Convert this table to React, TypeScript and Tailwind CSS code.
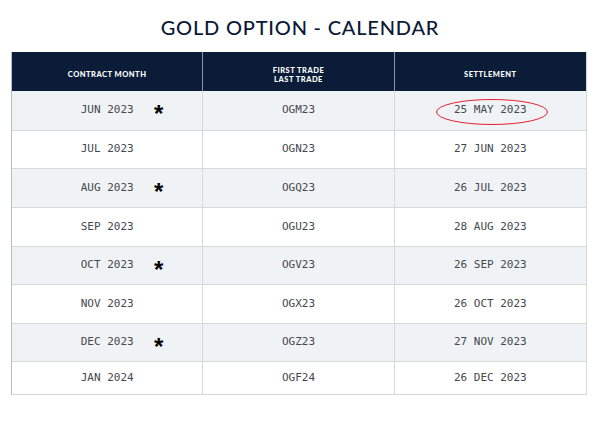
import React from "react";

const rows: { m: string; code: string; s: string; star: boolean; h: string }[] = [
  { m: "JUN 2023", code: "OGM23", s: "25 MAY 2023", star: true, h: "h-[39px]" },
  { m: "JUL 2023", code: "OGN23", s: "27 JUN 2023", star: false, h: "h-[38px]" },
  { m: "AUG 2023", code: "OGQ23", s: "26 JUL 2023", star: true, h: "h-[39px]" },
  { m: "SEP 2023", code: "OGU23", s: "28 AUG 2023", star: false, h: "h-[39px]" },
  { m: "OCT 2023", code: "OGV23", s: "26 SEP 2023", star: true, h: "h-[38px]" },
  { m: "NOV 2023", code: "OGX23", s: "26 OCT 2023", star: false, h: "h-[39px]" },
  { m: "DEC 2023", code: "OGZ23", s: "27 NOV 2023", star: true, h: "h-[38px]" },
  { m: "JAN 2024", code: "OGF24", s: "26 DEC 2023", star: false, h: "h-[33px]" },
];

const mono = "font-['DejaVu_Sans_Mono',monospace] text-[11px] text-[#45484d]";

export default function App() {
  return (
    <div className="w-[600px] h-[432px] bg-white overflow-hidden">
      <h1 className="text-center font-['Lato',sans-serif] font-medium text-[20px] tracking-[0.8px] text-[#0b1a36] pt-[12px] h-[52px] leading-[30px]">
        GOLD OPTION - CALENDAR
      </h1>
      <div className="ml-[11px] w-[576px] border-l border-[#b9bcc0] border-r border-r-[#d6d9dc] border-b border-b-[#d6d9dc]">
        <div className="grid grid-cols-3 h-[39px] bg-[#0a1c38] font-['Lato',sans-serif] font-black text-[7.5px] tracking-[0.5px] text-white leading-[9px]">
          <div className="flex items-center justify-center pt-[6px] border-r border-[#8a93a3]">CONTRACT MONTH</div>
          <div className="flex flex-col items-center justify-center pt-[6px] border-r border-[#8a93a3]">
            <span>FIRST TRADE</span>
            <span>LAST TRADE</span>
          </div>
          <div className="flex items-center justify-center pt-[6px]">SETTLEMENT</div>
        </div>
        {rows.map((r, i) => (
          <div
            key={r.m}
            className={`grid grid-cols-3 ${r.h} ${i % 2 === 0 ? "bg-[#f0f3f6]" : "bg-white"} ${i > 0 ? "border-t border-[#d6d9dc]" : ""}`}
          >
            <div className={`relative flex items-center justify-center border-r border-[#d6d9dc] ${mono}`}>
              <span>{r.m}</span>
              {r.star && (
                <span className="absolute left-[142px] top-[11px] font-['Liberation_Sans',sans-serif] font-bold text-[24px] leading-none text-black">
                  *
                </span>
              )}
            </div>
            <div className={`flex items-center justify-center border-r border-[#d6d9dc] ${mono}`}>{r.code}</div>
            <div className={`relative flex items-center justify-center ${mono}`}>
              <span>{r.s}</span>
              {i === 0 && (
                <svg className="absolute left-[40px] top-[7px]" width="114" height="28" viewBox="0 0 114 28">
                  <ellipse cx="57" cy="14" rx="55.5" ry="12.5" fill="none" stroke="#e3222a" strokeWidth="1" />
                </svg>
              )}
            </div>
          </div>
        ))}
      </div>
    </div>
  );
}
